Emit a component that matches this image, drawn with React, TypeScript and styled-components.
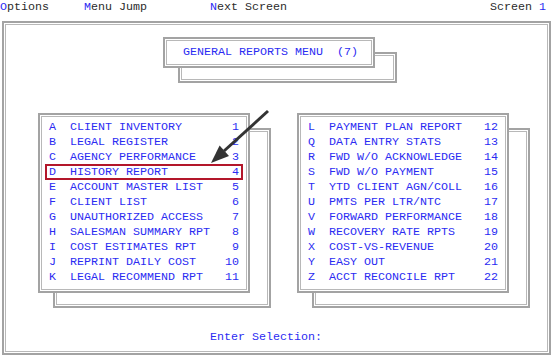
import styled, { createGlobalStyle } from "styled-components";

const GlobalStyle = createGlobalStyle`
  html, body {
    margin: 0;
    padding: 0;
    background: #fff;
  }
`;

const Screen = styled.div`
  position: relative;
  width: 555px;
  height: 359px;
  overflow: hidden;
  background: #fff;
  font-family: "Liberation Mono", "DejaVu Sans Mono", monospace;
  font-size: 11.67px;
  line-height: 15px;
  color: #2b2bf2;
  white-space: pre;
`;

const TopBar = styled.div`
  display: grid;
  grid-template-columns: 84px 126px 280px auto;
  height: 15px;
  color: #2b2b2b;
`;

const Hot = styled.span`
  color: #2b2bf2;
`;

const Frame = styled.div`
  box-sizing: border-box;
  border: 2px solid #a3a3a3;
  box-shadow: inset 0 0 0 1px #fff, inset 0 0 0 2px #b8b8b8;
  background: #fff;
`;

const Outer = styled(Frame)`
  margin: 6px 0 0 2px;
  width: 549px;
  height: 334px;
`;

const Stack = styled.div`
  position: relative;
  width: 212px;
`;

const Shadow = styled(Frame)<{ $extra: number }>`
  position: absolute;
  left: 15px;
  top: 15px;
  width: calc(100% + ${(p) => p.$extra}px);
  height: 100%;
  z-index: 0;
`;

const TitleWrap = styled(Stack)`
  margin: 14px 0 0 159px;
  height: 31px;
`;

const TitleBox = styled(Frame)`
  position: relative;
  z-index: 1;
  height: 100%;
  display: flex;
  align-items: center;
  padding-left: 18px;
`;

const Panels = styled.div`
  display: flex;
  gap: 47px;
  margin: 45px 0 0 34px;
`;

const PanelWrap = styled(Stack)`
  height: 180px;
`;

const PanelBox = styled(Frame)`
  position: relative;
  z-index: 1;
  height: 100%;
  padding: 5px 9px 0 9px;
`;

const Row = styled.div<{ $marked?: boolean }>`
  position: relative;
  display: grid;
  grid-template-columns: 21px 1fr auto;
  height: 15px;

  ${(p) =>
    p.$marked &&
    `
    &::after {
      content: "";
      position: absolute;
      inset: -1px -4px 0 -4px;
      border: 2px solid #b3162a;
    }
  `}
`;

const Prompt = styled.div`
  margin: 37px 0 0 206px;
`;

const Arrow = styled.svg`
  position: absolute;
  z-index: 5;
  left: 205px;
  top: 105px;
  width: 70px;
  height: 65px;
  pointer-events: none;
`;

type Item = [string, string, number];

const leftItems: Item[] = [
  ["A", "CLIENT INVENTORY", 1],
  ["B", "LEGAL REGISTER", 2],
  ["C", "AGENCY PERFORMANCE", 3],
  ["D", "HISTORY REPORT", 4],
  ["E", "ACCOUNT MASTER LIST", 5],
  ["F", "CLIENT LIST", 6],
  ["G", "UNAUTHORIZED ACCESS", 7],
  ["H", "SALESMAN SUMMARY RPT", 8],
  ["I", "COST ESTIMATES RPT", 9],
  ["J", "REPRINT DAILY COST", 10],
  ["K", "LEGAL RECOMMEND RPT", 11],
];

const rightItems: Item[] = [
  ["L", "PAYMENT PLAN REPORT", 12],
  ["Q", "DATA ENTRY STATS", 13],
  ["R", "FWD W/O ACKNOWLEDGE", 14],
  ["S", "FWD W/O PAYMENT", 15],
  ["T", "YTD CLIENT AGN/COLL", 16],
  ["U", "PMTS PER LTR/NTC", 17],
  ["V", "FORWARD PERFORMANCE", 18],
  ["W", "RECOVERY RATE RPTS", 19],
  ["X", "COST-VS-REVENUE", 20],
  ["Y", "EASY OUT", 21],
  ["Z", "ACCT RECONCILE RPT", 22],
];

const MenuPanel = ({ items, marked }: { items: Item[]; marked?: string }) => (
  <PanelWrap>
    <PanelBox>
      {items.map(([key, label, num]) => (
        <Row key={key} $marked={key === marked}>
          <span>{key}</span>
          <span>{label}</span>
          <span>{num}</span>
        </Row>
      ))}
    </PanelBox>
    <Shadow $extra={6} />
  </PanelWrap>
);

const App = () => {
  return (
    <Screen>
      <GlobalStyle />
      <TopBar>
        <span>
          <Hot>O</Hot>ptions
        </span>
        <span>
          <Hot>M</Hot>enu Jump
        </span>
        <span>
          <Hot>N</Hot>ext Screen
        </span>
        <span>
          Screen <Hot>1</Hot>
        </span>
      </TopBar>

      <Outer>
        <TitleWrap>
          <TitleBox>GENERAL REPORTS MENU  (7)</TitleBox>
          <Shadow $extra={7} />
        </TitleWrap>

        <Panels>
          <MenuPanel items={leftItems} marked="D" />
          <MenuPanel items={rightItems} />
        </Panels>

        <Prompt>Enter Selection:</Prompt>
      </Outer>

      <Arrow viewBox="0 0 70 65">
        <line x1="63" y1="6" x2="19" y2="46" stroke="#333" strokeWidth="3" />
        <polygon points="6,58 24,51 14.6,40.6" fill="#333" />
      </Arrow>
    </Screen>
  );
};

export default App;
